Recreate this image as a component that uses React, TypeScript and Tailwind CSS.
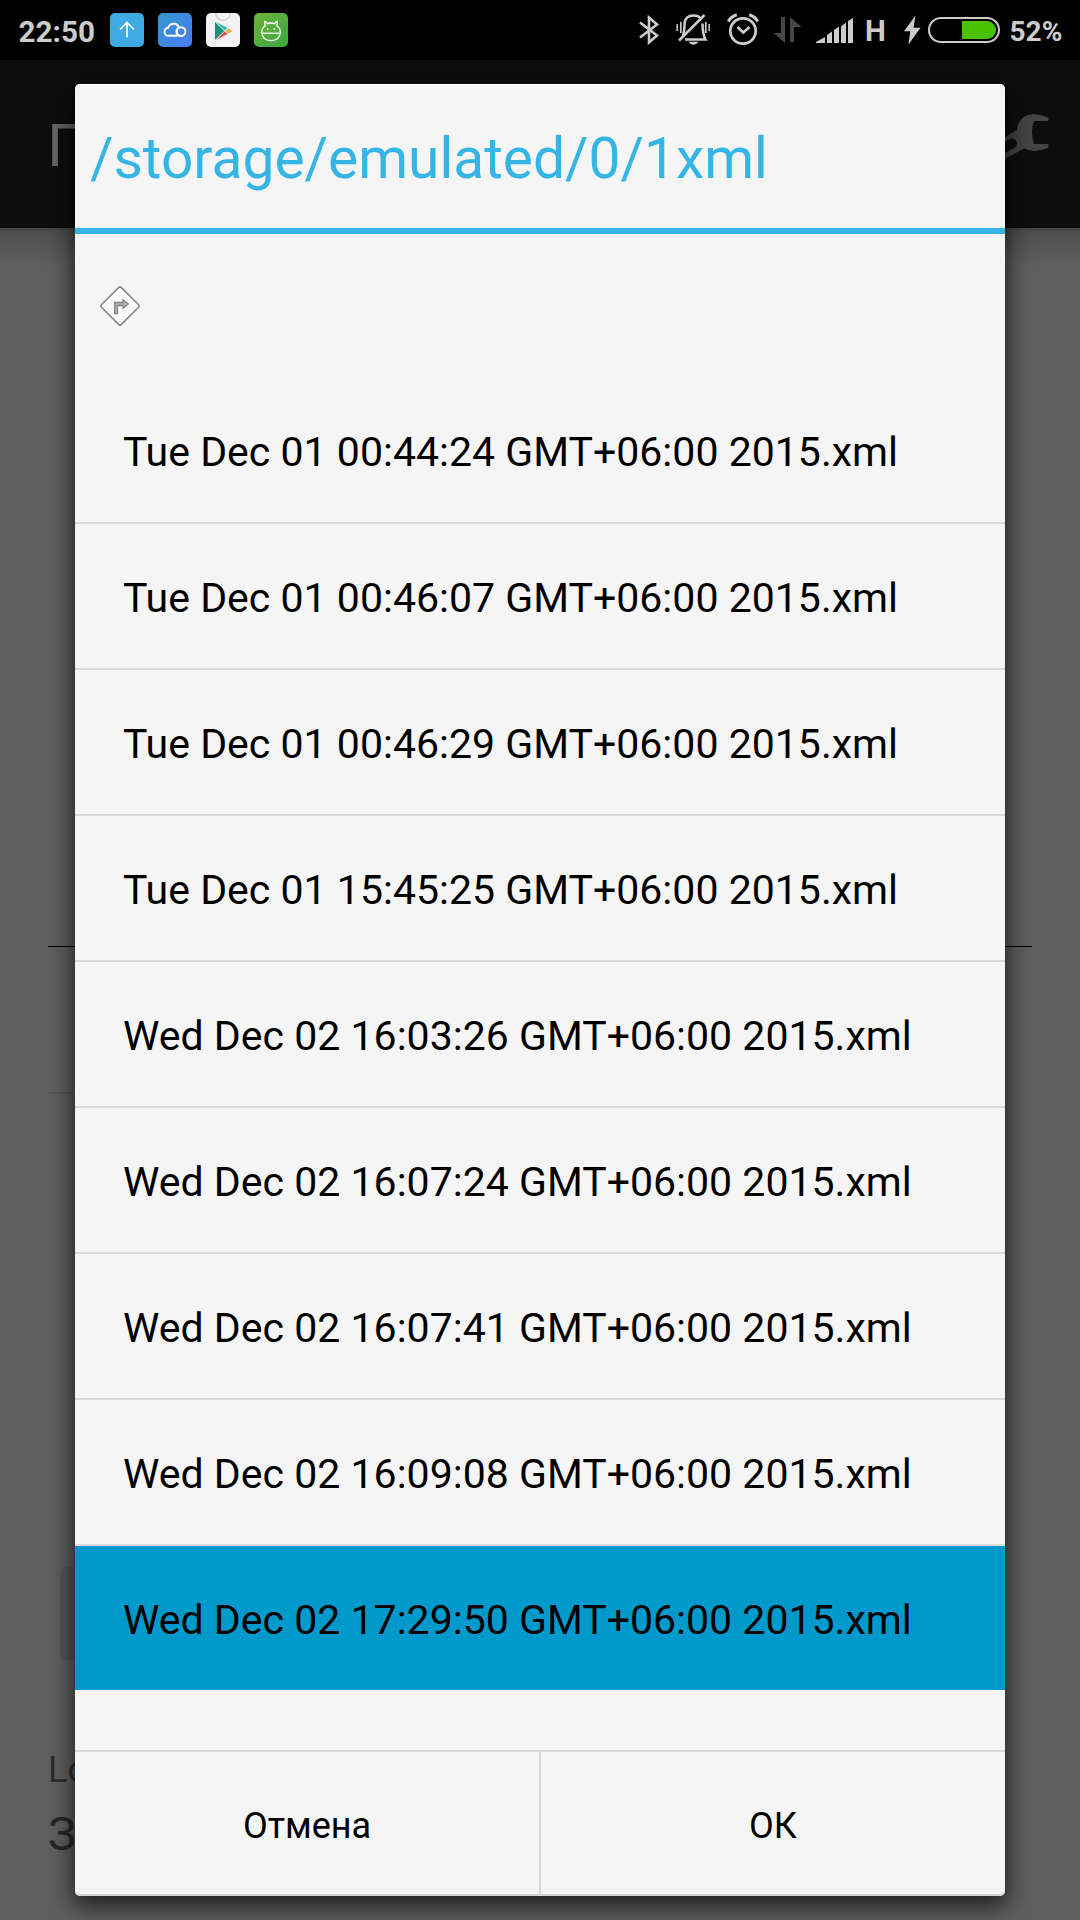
import React from "react";

const files = [
  "Tue Dec 01 00:44:24 GMT+06:00 2015.xml",
  "Tue Dec 01 00:46:07 GMT+06:00 2015.xml",
  "Tue Dec 01 00:46:29 GMT+06:00 2015.xml",
  "Tue Dec 01 15:45:25 GMT+06:00 2015.xml",
  "Wed Dec 02 16:03:26 GMT+06:00 2015.xml",
  "Wed Dec 02 16:07:24 GMT+06:00 2015.xml",
  "Wed Dec 02 16:07:41 GMT+06:00 2015.xml",
  "Wed Dec 02 16:09:08 GMT+06:00 2015.xml",
  "Wed Dec 02 17:29:50 GMT+06:00 2015.xml",
];
const selected = 8;

function UploadIcon() {
  return (
    <svg width="34" height="34" viewBox="0 0 34 34">
      <rect width="34" height="34" rx="5" fill="#3fa9e1" />
      <path d="M17 24.5V10M10 16.5L17 9.5L24 16.5" fill="none" stroke="#fff" strokeWidth="1.7" />
    </svg>
  );
}

function CloudIcon() {
  return (
    <svg width="34" height="34" viewBox="0 0 34 34">
      <defs>
        <linearGradient id="cloud" x1="0" y1="0" x2="1" y2="1">
          <stop offset="0" stopColor="#3597cf" />
          <stop offset="1" stopColor="#4a7bf5" />
        </linearGradient>
      </defs>
      <rect width="34" height="34" rx="5" fill="url(#cloud)" />
      <g fill="none" stroke="#fff" strokeWidth="1.9">
        <path d="M19.5 22.8H10.8a4 4 0 0 1-.6-8 5.6 5.6 0 0 1 10.7-.3" />
        <circle cx="23" cy="18.6" r="4.4" />
        <path d="M19.3 16c-1.6 2.6-.6 6 2 6.8" />
      </g>
    </svg>
  );
}

function StoreIcon() {
  return (
    <svg width="34" height="34" viewBox="0 0 34 34">
      <rect width="34" height="34" rx="5" fill="#f2f2f2" />
      <path d="M9.5 0a7.5 7.2 0 0 0 15 0" fill="none" stroke="#cfcfcf" strokeWidth="1.3" />
      <path d="M9 9L18.2 18L9 27Z" fill="#17917f" />
      <path d="M10.2 9L21.5 15L18.6 17.6Z" fill="#1fbfa0" />
      <path d="M10.2 27L21.5 21L18.6 18.4Z" fill="#e2504a" />
      <path d="M19.2 18L22.2 15.2L26.3 18L22.2 20.8Z" fill="#efb04f" />
    </svg>
  );
}

function DroidIcon() {
  return (
    <svg width="34" height="34" viewBox="0 0 34 34">
      <defs>
        <linearGradient id="droid" x1="0" y1="0" x2="1" y2="1">
          <stop offset="0" stopColor="#6db33a" />
          <stop offset="1" stopColor="#3aa83f" />
        </linearGradient>
      </defs>
      <rect width="34" height="34" rx="5" fill="url(#droid)" />
      <g fill="none" stroke="#fff" strokeWidth="1.3">
        <path d="M11.2 12.8L10.6 8.4Q11.8 7.8 13.4 10.6Q17 9.4 20.6 10.6Q22.2 7.8 23.4 8.4L22.8 12.8Q26.3 15.4 26.3 19Q26 27.4 17 27.6Q8 27.4 7.7 19Q7.7 15.4 11.2 12.8Z" />
        <path d="M8 20.3H26" />
      </g>
      <circle cx="13.6" cy="16" r="1" fill="#fff" />
      <circle cx="20.4" cy="16" r="1" fill="#fff" />
    </svg>
  );
}

function BluetoothIcon() {
  return (
    <svg width="22" height="32" viewBox="638 14 22 32">
      <path d="M640 22.5L657 35.5L649 42.5V17.5L657 24.5L640 37.5" fill="none" stroke="#ccc" strokeWidth="2.6" />
    </svg>
  );
}

function MutedBellIcon() {
  return (
    <svg width="36" height="32" viewBox="675 14 36 32">
      <g fill="none" stroke="#ccc" strokeWidth="2.5">
        <path d="M682.5 36Q684.5 33 684.5 24Q685 15.5 693.5 15.5Q698.5 15.5 700 18" />
        <path d="M702.5 23.5Q702.5 34 705.5 39.5H685" />
        <path d="M679 40.5L704.500 15" />
        <path d="M677.2 24V31M709.2 24V31" strokeWidth="1.5" />
        <path d="M680.8 22V33M705.8 22V33" strokeWidth="1.7" />
      </g>
      <path d="M688.500 41.800H698.500Q696.500 44.800 693.500 44.800T688.500 41.800Z" fill="#ccc" />
    </svg>
  );
}

function AlarmIcon() {
  return (
    <svg width="34" height="34" viewBox="726 12 34 34">
      <g fill="none" stroke="#ccc" strokeWidth="2.7">
        <circle cx="743" cy="31" r="12.7" />
        <path d="M737.500 27L743.300 32.500L749.500 27" />
        <path d="M728.300 21.500Q731 16.500 736.800 14.800M757.700 21.500Q755 16.500 749.200 14.800" strokeWidth="3" />
      </g>
    </svg>
  );
}

function DataIcon() {
  return (
    <svg width="30" height="30" viewBox="773 15 30 30">
      <path d="M785 17V43L773.500 33H781V17ZM790 42V17L801.500 27H794V42Z" fill="#474747" />
    </svg>
  );
}

function SignalIcon() {
  return (
    <svg width="38" height="30" viewBox="816 15 38 30">
      <path d="M816 43V42L825 37V43ZM827 43V35L832 31.500V43ZM834 43V30L839 26.500V43ZM841 43V26.500L846 22.500V43ZM848 43V21L853 18V43Z" fill="#ccc" />
    </svg>
  );
}

function BatteryIcon() {
  return (
    <svg width="97" height="32" viewBox="903 14 97 32">
      <path d="M915.500 15.500L904 31.200L910.300 31.200L908.500 44.500L920.500 27.800L913.500 27.800Z" fill="#ccc" />
      <rect x="929" y="18" width="70" height="24" rx="12" fill="none" stroke="#ccc" strokeWidth="2" />
      <path d="M962 21H987A9 9 0 0 1 987 39H962Z" fill="#49c200" />
    </svg>
  );
}

function StatusBar() {
  return (
    <header className="flex h-15 shrink-0 items-start bg-black text-[#ccc]">
      <span className="mt-[13.5px] ml-[18.5px] w-[91.5px] text-[29.7px] leading-[36px] font-bold">22:50</span>
      <div className="mt-[13px] flex gap-[14px]">
        <UploadIcon />
        <CloudIcon />
        <StoreIcon />
        <DroidIcon />
      </div>
      <div className="ml-[350px] mt-[14px] flex">
        <BluetoothIcon />
        <div className="ml-[15px]"><MutedBellIcon /></div>
        <div className="ml-[15px] -mt-[2px]"><AlarmIcon /></div>
        <div className="ml-[13px] mt-px"><DataIcon /></div>
        <div className="ml-[13px] mt-px"><SignalIcon /></div>
        <span className="-mt-px ml-[11px] w-[38px] text-[29.5px] leading-[36px] font-bold">H</span>
        <BatteryIcon />
        <span className="-mt-px ml-[9.500px] text-[28px] leading-[37px] font-bold">52%</span>
      </div>
    </header>
  );
}

function Wrench() {
  return (
    <svg width="100" height="80" viewBox="0 0 100 80" className="mt-[40px] mr-[20px]">
      <path
        d="M88 17.500Q74 12 65 16Q57.500 21 57 30L22 51L30 67L64 48.500Q74 53.500 88 48Q89 46 88 44H74Q70 33 74 21H88Q89 19 88 17.500ZM45 42L51 38.500Q56 38.500 57 43Q57 46.500 54 48L38 57L34 49Z"
        fill="#444444"
        fillRule="evenodd"
      />
    </svg>
  );
}

function Backdrop() {
  return (
    <div className="flex flex-1 flex-col">
      <div className="flex h-[168px] items-start justify-between bg-[#0d0d0d]">
        <span className="mt-[51px] ml-[47px] text-[60px] leading-[70px] text-[#666]">П</span>
        <Wrench />
      </div>
      <div className="h-10 border-t-[3px] border-[#474747] bg-gradient-to-b from-[#4e4e4e] to-[#5f5f5f]" />
      <div className="mx-12 mt-[678px] h-px bg-black" />
      <div className="ml-12 mt-[145px] h-[2px] w-[400px] bg-[#565656]" />
      <div className="ml-[60px] mt-[473px] h-[93px] w-[400px] rounded-md bg-[#565656]" />
      <p className="mt-[89px] ml-12 text-[36px] leading-[42px] text-[#2c2c2c]">Lo</p>
      <p className="mt-[15px] ml-12 text-[47px] leading-[56px] text-[#262626]">З</p>
    </div>
  );
}

function TurnIcon() {
  return (
    <svg width="42" height="42" viewBox="0 0 42 42">
      <rect x="7" y="7" width="28" height="28" rx="2" transform="rotate(45 21 21)" fill="#fafafa" stroke="#858585" strokeWidth="1.5" />
      <path d="M15.700 28.500V17.500H24V14.800L29.300 19L24 23.200V20.500H18.500V28.500Z" fill="#b4b4b4" stroke="#858585" strokeWidth="1.3" />
    </svg>
  );
}

function FileDialog() {
  return (
    <section className="absolute left-[75px] top-[84px] flex h-[1812px] w-[930px] flex-col rounded-[5px] bg-[#f5f5f5] shadow-[0_8px_24px_2px_rgba(0,0,0,0.7),inset_0_-2px_0_#d4d4d4,inset_0_1px_0_#fff]">
      <h1 className="h-[150px] border-b-[6px] border-[#35b5e5] pl-[15px] pt-[41px] text-[56.900px] leading-[67px] text-[#35b5e5]">
        /storage/emulated/0/1xml
      </h1>
      <div className="h-[144px] pl-[24px] pt-[51px]">
        <TurnIcon />
      </div>
      <ul className="text-[41px] leading-[48px] tracking-[0.02px] text-black">
        {files.map((name, i) => (
          <li
            key={name}
            className={
              i === selected
                ? "flex h-[144px] items-center bg-[#0099cc] pt-1 pl-12"
                : "flex h-[146px] items-center border-b-2 border-[#dadada] pt-1 pl-12"
            }
          >
            <span>{name}</span>
          </li>
        ))}
      </ul>
      <div className="mt-[60px] flex h-[146px] border-t-2 border-[#dadada] text-[36px] text-black">
        <button className="flex-1 border-r-2 border-[#dadada] pt-1">Отмена</button>
        <button className="flex-1 pt-1">ОК</button>
      </div>
    </section>
  );
}

export default function App() {
  return (
    <main className="relative flex h-[1920px] w-[1080px] flex-col overflow-hidden bg-[#5f5f5f] font-['Roboto',sans-serif]">
      <StatusBar />
      <Backdrop />
      <FileDialog />
    </main>
  );
}
